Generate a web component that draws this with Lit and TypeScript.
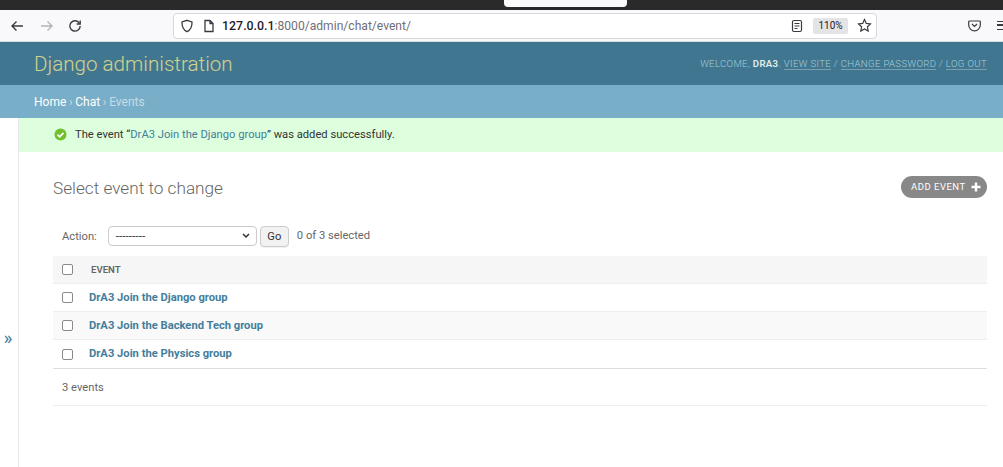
import { LitElement, html, css } from "lit";
import { customElement } from "lit/decorators.js";

const rows = [
  "DrA3 Join the Django group",
  "DrA3 Join the Backend Tech group",
  "DrA3 Join the Physics group",
];

@customElement("app-root")
export class AppRoot extends LitElement {
  static styles = css`
    :host { display: block; width: 1003px; height: 467px; overflow: hidden; background: #fff; font-family: Roboto, "Liberation Sans", sans-serif; color: #333; }
    * { box-sizing: border-box; }
    .strip { height: 10px; background: #2b2a2b; display: flex; padding-left: 504px; }
    .tab { width: 123px; height: 7px; background: #fbfbfc; border-radius: 0 0 4px 4px; }
    .toolbar { height: 32px; background: #f9f9fb; display: flex; align-items: center; border-bottom: 1px solid #d5dde3; }
    .nav { width: 173px; display: flex; padding-left: 10px; align-items: center; flex: none; }
    .nav svg { display: block; }
    .nav .fwd { margin: 0 14px 0 16px; }
    .url { width: 704px; height: 26px; flex: none; background: #fff; border: 1px solid #d8d8dc; border-radius: 4px; display: flex; align-items: center; padding-left: 6px; font-size: 12.1px; color: #6f6f78; }
    .url svg { flex: none; display: block; }
    .url .page { margin-left: 9px; }
    .url .addr { margin-left: 7px; flex: 1; }
    .url b { font-weight: 500; color: #1d1b26; font-size: 12.4px; }
    .zoomv { width: 35px; height: 16px; background: #e4e4e7; border-radius: 2px; font-size: 10px; color: #222; display: flex; align-items: center; justify-content: center; margin: 0 9px 0 10px; }
    .star { margin-right: 4px; }
    .right { display: flex; align-items: center; padding-left: 91px; flex: none; }
    .menu { width: 10px; height: 9px; margin-left: 16px; flex: none; border-top: 1.4px solid #3a3a40; border-bottom: 1.4px solid #3a3a40; }
    .menu::after { content: ""; display: block; height: 1.400px; margin-top: 2.400px; background: #3a3a40; }
    .header { height: 43px; background: #417690; display: flex; align-items: center; justify-content: space-between; padding: 0 16px 0 34px; }
    .brand { font-size: 20.6px; font-weight: 300; color: #f5e88c; opacity: .8; }
    .tools { font-size: 9.6px; color: #a4cdd9; letter-spacing: .35px; text-transform: uppercase; font-weight: 300; }
    .tools b { font-weight: 600; color: #e1f0ea; }
    .tools a { border-bottom: 1px solid rgba(255,255,255,.3); }
    .crumbs { height: 33px; background: #79aec8; padding-left: 34px; display: flex; align-items: center; font-size: 12px; color: #c4dce8; }
    .crumbs a { color: #fff; }
    .crumbs i { font-style: normal; padding: 0 2.700px; color: #c4dce8; }
    .body { display: flex; height: 349px; }
    .side { width: 19px; flex: none; border-right: 1px solid #e8e8e8; color: #447e9b; font-size: 19px; display: flex; align-items: center; justify-content: center; padding: 90px 2px 0 0; line-height: 1; }
    .main { flex: 1; min-width: 0; }
    .msg { height: 34px; background: #dfd; display: flex; align-items: center; padding: 0 0 1px 35px; font-size: 11.2px; color: #333; }
    .msg svg { margin-right: 8px; }
    .msg a { color: #447e9b; }
    .content { padding: 0 16px 0 34px; }
    .title { display: flex; justify-content: space-between; align-items: center; height: 69px; padding-top: 2px; }
    h1 { margin: 0; font-size: 17.2px; font-weight: 300; color: #666; }
    .add { height: 22px; width: 86px; background: #888; color: #fff; border-radius: 11px; font-size: 9.5px; letter-spacing: .5px; display: flex; align-items: center; justify-content: space-between; padding: 0 6px 1px 10px; margin-top: -1px; }
    .actions { height: 30px; display: flex; align-items: center; padding-left: 9px; font-size: 11.2px; color: #666; }
    .sel { margin-left: 11px; width: 149px; height: 20px; border: 1px solid #ccc; border-radius: 4px; background: #fff; display: flex; align-items: center; justify-content: space-between; padding: 0 5px 0 7px; color: #333; font-size: 11.8px; }
    .go { margin-left: 3px; width: 29px; height: 21px; border: 1px solid #ccc; border-radius: 4px; background: #f2f2f2; color: #333; display: flex; align-items: center; justify-content: center; font-size: 11.2px; box-shadow: 0 1px 1px rgba(0,0,0,.06); }
    .count { margin-left: 8px; margin-top: -2px; }
    .box { width: 11px; height: 11px; border: 1.500px solid #8a8a8a; border-radius: 2px; background: #fff; flex: none; }
    .th { height: 28px; background: #f6f6f6; border-bottom: 1px solid #eee; display: flex; align-items: center; padding-left: 9px; font-size: 9.6px; font-weight: 600; color: #666; margin-top: 5px; }
    .th span { margin-left: 18px; }
    .row { height: 28px; display: flex; align-items: center; padding-left: 9px; border-bottom: 1px solid #eee; font-size: 11.2px; font-weight: 700; color: #447e9b; }
    .row span { margin-left: 16px; margin-top: -1px; }
    .row.alt { background: #f9f9f9; }
    .row.last { height: 29px; border-bottom: 1px solid #ddd; }
    .pager { height: 37px; border-bottom: 1px solid #eee; padding-left: 9px; display: flex; align-items: center; font-size: 11.2px; color: #666; }
  `;

  render() {
    return html`
      <div class="strip"><div class="tab"></div></div>
      <div class="toolbar">
        <div class="nav">
          <svg width="14" height="14" viewBox="0 0 14 14" fill="none" stroke="#3a3a40" stroke-width="1.4"><path d="M13 7H2M6.500 2.500 2 7l4.500 4.500"/></svg>
          <svg class="fwd" width="14" height="14" viewBox="0 0 14 14" fill="none" stroke="#b4b4b8" stroke-width="1.4"><path d="M1 7h11M7.500 2.500 12 7l-4.500 4.500"/></svg>
          <svg width="14" height="14" viewBox="0 0 14 14" fill="none" stroke="#3a3a40" stroke-width="1.4"><path d="M11.600 4.500A5.200 5.200 0 1 0 12.200 7"/><path d="M12.200 1.500v3.500H8.700"/></svg>
        </div>
        <div class="url">
          <svg width="14" height="14" viewBox="0 0 14 14" fill="none" stroke="#3a3a40" stroke-width="1.3"><path d="M7 1.300 12 3c.2 5-1.600 8-5 9.700C3.600 11 1.800 8 2 3Z"/></svg>
          <svg class="page" width="12" height="14" viewBox="0 0 12 14" fill="none" stroke="#3a3a40" stroke-width="1.3"><path d="M2 1.500h5l3 3v8H2zM7 1.500v3h3"/></svg>
          <div class="addr"><b>127.0.0.1</b>:8000/admin/chat/event/</div>
          <svg width="12" height="14" viewBox="0 0 12 14" fill="none" stroke="#3a3a40" stroke-width="1.2"><rect x="1.500" y="1.500" width="9" height="11" rx="1.500"/><path d="M3.500 4.500h5M3.500 7h5M3.500 9.500h3"/></svg>
          <div class="zoomv">110%</div>
          <svg class="star" width="15" height="15" viewBox="0 0 15 15" fill="none" stroke="#3a3a40" stroke-width="1.2"><path d="m7.500 1.500 1.800 3.900 4.200.5-3.100 2.900.8 4.200-3.700-2.100-3.700 2.100.8-4.200L1.500 5.900l4.200-.5z"/></svg>
        </div>
        <div class="right">
          <svg width="13" height="13" viewBox="0 0 13 13" fill="none" stroke="#3a3a40" stroke-width="1.2"><path d="M1.500 2h10c.5 0 .8.300.8.800v3.200a5.800 5.800 0 0 1-11.600 0V2.800c0-.5.300-.8.800-.8Z"/><path d="m4 5 2.500 2.500L9 5"/></svg>
          <div class="menu"></div>
        </div>
      </div>
      <div class="header">
        <div class="brand">Django administration</div>
        <div class="tools">Welcome, <b>DrA3</b>. <a>View site</a> / <a>Change password</a> / <a>Log out</a></div>
      </div>
      <div class="crumbs"><a>Home</a><i>›</i><a>Chat</a><i>›</i>Events</div>
      <div class="body">
        <div class="side">»</div>
        <div class="main">
          <div class="msg">
            <svg width="13" height="13" viewBox="0 0 13 13"><circle cx="6.500" cy="6.500" r="6" fill="#70bf2b"/><path d="m3.500 6.700 2.100 2.100 3.900-4" fill="none" stroke="#fff" stroke-width="1.800"/></svg>
            <span>The event “<a>DrA3 Join the Django group</a>” was added successfully.</span>
          </div>
          <div class="content">
            <div class="title">
              <h1>Select event to change</h1>
              <div class="add"><span>ADD EVENT</span><svg width="10" height="10" viewBox="0 0 10 10"><path d="M5 .5v9M.5 5h9" stroke="#fff" stroke-width="2.400"/></svg></div>
            </div>
            <div class="actions">
              <span>Action:</span>
              <div class="sel"><span>---------</span><svg width="10" height="8" viewBox="0 0 10 8" fill="none" stroke="#333" stroke-width="1.500"><path d="m2 2 3 3 3-3"/></svg></div>
              <div class="go">Go</div>
              <span class="count">0 of 3 selected</span>
            </div>
            <div class="th"><div class="box"></div><span>EVENT</span></div>
            ${rows.map((r, i) => html`<div class="row ${i === 1 ? "alt" : ""} ${i === 2 ? "last" : ""}"><div class="box"></div><span>${r}</span></div>`)}
            <div class="pager">3 events</div>
          </div>
        </div>
      </div>
    `;
  }
}
